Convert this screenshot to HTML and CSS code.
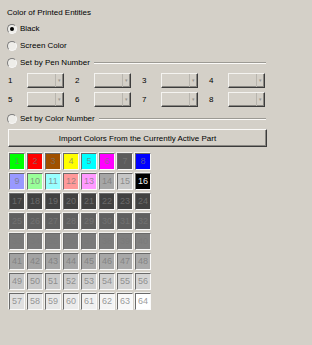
FILE: index.html
```html
<!DOCTYPE html>
<html lang="en">
<head>
    <meta charset="UTF-8">
    <title>Color of Printed Entities</title>
    <link rel="stylesheet" href="styles.css">
</head>
<body>
    <div class="panel">
        <div class="title">Color of Printed Entities</div>

        <div class="option"><span class="radio checked"></span>Black</div>
        <div class="option"><span class="radio"></span>Screen Color</div>
        <div class="option"><span class="radio"></span>Set by Pen Number<span class="rule"></span></div>

        <div class="pens">
            <div class="pen"><span class="pen-num">1</span><span class="combo"><span class="drop">&#9662;</span></span></div>
            <div class="pen"><span class="pen-num">2</span><span class="combo"><span class="drop">&#9662;</span></span></div>
            <div class="pen"><span class="pen-num">3</span><span class="combo"><span class="drop">&#9662;</span></span></div>
            <div class="pen"><span class="pen-num">4</span><span class="combo"><span class="drop">&#9662;</span></span></div>
            <div class="pen"><span class="pen-num">5</span><span class="combo"><span class="drop">&#9662;</span></span></div>
            <div class="pen"><span class="pen-num">6</span><span class="combo"><span class="drop">&#9662;</span></span></div>
            <div class="pen"><span class="pen-num">7</span><span class="combo"><span class="drop">&#9662;</span></span></div>
            <div class="pen"><span class="pen-num">8</span><span class="combo"><span class="drop">&#9662;</span></span></div>
        </div>

        <div class="option second"><span class="radio"></span>Set by Color Number<span class="rule"></span></div>

        <button class="import">Import Colors From the Currently Active Part</button>

        <div class="swatches" id="swatches"></div>
    </div>

    <script>
        const colors = [
            '#00ff00', '#ff0000', '#a05000', '#ffff00', '#00ffff', '#ff00ff', '#5c5c5c', '#0000ff',
            '#9999ff', '#99ff99', '#99ffff', '#ff9999', '#ff99ff', '#a6a6a6', '#c6c6c6', '#000000',
            '#424242', '#424242', '#424242', '#424242', '#424242', '#424242', '#424242', '#424242',
            '#606060', '#606060', '#606060', '#606060', '#606060', '#606060', '#606060', '#606060',
            '#7a7a7a', '#7a7a7a', '#7a7a7a', '#7a7a7a', '#7a7a7a', '#7c7c7c', '#7e7e7e', '#808080',
            '#a2a2a2', '#a3a3a3', '#a4a4a4', '#a5a5a5', '#a6a6a6', '#a7a7a7', '#a8a8a8', '#aaaaaa',
            '#c6c6c6', '#c8c8c8', '#cacaca', '#cccccc', '#cecece', '#d0d0d0', '#d2d2d2', '#d4d4d4',
            '#e0e0e0', '#e4e4e4', '#e8e8e8', '#ececec', '#f0f0f0', '#f4f4f4', '#f8f8f8', '#ffffff'
        ];

        const grid = document.getElementById('swatches');
        colors.forEach((c, i) => {
            const cell = document.createElement('div');
            cell.className = i === 15 ? 'swatch light-text' : 'swatch';
            cell.style.background = c;
            cell.textContent = i + 1;
            grid.appendChild(cell);
        });
    </script>
</body>
</html>
```

FILE: styles.css
```css
body {
    margin: 0;
    background-color: #d4d0c8;
    font-family: "Liberation Sans", Arial, sans-serif;
    font-size: 8px;
    color: #000;
}

.panel {
    width: 259px;
    padding: 8px 0 0 7px;
}

.title {
    line-height: 10px;
    margin-bottom: 2px;
}

.option {
    display: flex;
    align-items: center;
    height: 17px;
}

.option.second {
    margin-top: 1px;
}

.radio {
    width: 8px;
    height: 8px;
    margin-right: 3px;
    border: 1px solid;
    border-color: #7c7c7c #f8f8f8 #f8f8f8 #7c7c7c;
    border-radius: 50%;
    background-color: #eeede9;
    display: flex;
    align-items: center;
    justify-content: center;
}

.radio.checked::after {
    content: "";
    width: 4px;
    height: 4px;
    border-radius: 50%;
    background-color: #000;
}

.rule {
    flex: 1;
    margin-left: 4px;
    border-top: 1px solid #9c9a94;
    border-bottom: 1px solid #fbfaf8;
}

.pens {
    display: grid;
    grid-template-columns: repeat(4, 56px);
    column-gap: 11px;
    padding-left: 1px;
}

.pen {
    display: flex;
    align-items: center;
    height: 19px;
}

.pen-num {
    width: 19px;
}

.combo {
    width: 35px;
    height: 13px;
    border: 1px solid;
    border-color: #f4f3f0 #3c3c3c #3c3c3c #f4f3f0;
    box-shadow: inset -1px -1px 0 #8a8883;
    display: flex;
    justify-content: flex-end;
}

.drop {
    width: 6px;
    margin-right: 1px;
    border-left: 1px solid #b8b5ae;
    color: #9a9891;
    font-size: 5px;
    line-height: 13px;
    text-align: center;
}

.import {
    display: block;
    width: 259px;
    height: 18px;
    margin: 2px 0 0 1px;
    padding: 0;
    border: 1px solid;
    border-color: #fbfaf8 #3c3c3c #3c3c3c #fbfaf8;
    box-shadow: inset -1px -1px 0 #8a8883;
    background-color: #d4d0c8;
    font-family: "Liberation Sans", Arial, sans-serif;
    font-size: 8px;
    color: #000;
}

.swatches {
    display: grid;
    grid-template-columns: repeat(8, 16px);
    grid-auto-rows: 17px;
    column-gap: 2px;
    row-gap: 3px;
    margin: 6px 0 0 2px;
}

.swatch {
    border: 1px solid;
    border-color: #6a6a6a #fafafa #fafafa #6a6a6a;
    box-shadow: -1px -1px 0 #f2f1ee;
    color: rgba(120, 120, 120, 0.75);
    font-size: 9px;
    line-height: 15px;
    text-align: center;
}

.swatch.light-text {
    color: #f0f0f0;
}
```
